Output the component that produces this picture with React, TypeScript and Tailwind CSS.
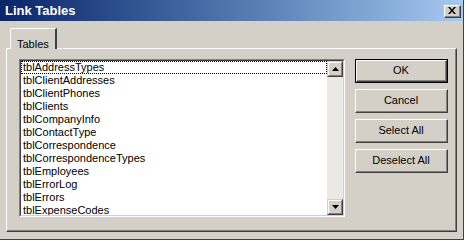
const tables = [
  'tblAddressTypes',
  'tblClientAddresses',
  'tblClientPhones',
  'tblClients',
  'tblCompanyInfo',
  'tblContactType',
  'tblCorrespondence',
  'tblCorrespondenceTypes',
  'tblEmployees',
  'tblErrorLog',
  'tblErrors',
  'tblExpenseCodes',
];

function Win95Button({ label, isDefault = false }: { label: string; isDefault?: boolean }) {
  const inner = (
    <div className="flex-1 flex border-t border-l border-t-white border-l-white border-r border-b border-r-[#404040] border-b-[#404040]">
      <div className="flex-1 flex items-center justify-center border-r border-b border-r-[#808080] border-b-[#808080] text-[11px] text-black">
        {label}
      </div>
    </div>
  );

  if (isDefault) {
    return <div className="h-[24px] flex border border-black">{inner}</div>;
  }
  return <div className="h-[24px] flex">{inner}</div>;
}

function ScrollArrow({ up }: { up: boolean }) {
  return (
    <div className="w-[16px] h-[16px] flex border-t border-l border-t-[#d4d0c8] border-l-[#d4d0c8] border-r border-b border-r-[#404040] border-b-[#404040] bg-[#d4d0c8]">
      <div className="flex-1 flex items-center justify-center border-t border-l border-t-white border-l-white border-r border-b border-r-[#808080] border-b-[#808080]">
        <svg width="7" height="4" viewBox="0 0 7 4">
          {up ? <path d="M3.5 0 L7 4 L0 4 Z" fill="#000" /> : <path d="M0 0 L7 0 L3.5 4 Z" fill="#000" />}
        </svg>
      </div>
    </div>
  );
}

export default function App() {
  return (
    <div className="w-[466px] h-[241px] bg-white overflow-hidden font-['Liberation_Sans',Arial,sans-serif]">
      <div className="w-[464px] h-[240px] bg-[#d4d0c8] flex flex-col border-r border-b border-r-[#404040] border-b-[#404040]">
        {/* title bar */}
        <div className="h-[21px] flex items-center justify-between pl-[5px] pr-[2px] bg-gradient-to-r from-[#0a246a] to-[#a6caf0]">
          <span className="text-[13px] font-bold text-white">Link Tables</span>
          <div className="w-[17px] h-[13px] mt-[1px] flex border-t border-l border-t-white border-l-white border-r border-b border-r-[#404040] border-b-[#404040] bg-[#d4d0c8]">
            <div className="flex-1 flex items-center justify-center border-r border-b border-r-[#808080] border-b-[#808080]">
              <svg width="8" height="7" viewBox="0 0 8 7">
                <path d="M0 0 L2 0 L4 2.5 L6 0 L8 0 L5 3.5 L8 7 L6 7 L4 4.5 L2 7 L0 7 L3 3.5 Z" fill="#000" />
              </svg>
            </div>
          </div>
        </div>

        {/* body */}
        <div className="pt-[7px] pl-[6px]">
          <div className="flex pl-[4px]">
            <div className="relative z-10 -mb-px h-[21px] px-[6px] pt-[2px] bg-[#d4d0c8] rounded-tl-[2px] border-t border-l border-t-white border-l-white border-r-2 border-r-[#404040]">
              <span className="text-[11px] text-black">Tables</span>
            </div>
          </div>

          {/* tab panel */}
          <div className="w-[451px] h-[184px] flex border-t border-l border-t-white border-l-white border-r border-b border-r-[#404040] border-b-[#404040]">
            <div className="flex-1 flex pt-[10px] pl-[12px] border-r border-b border-r-[#808080] border-b-[#808080]">
              {/* list box */}
              <div className="w-[326px] h-[158px] flex border-t border-l border-t-[#808080] border-l-[#808080] border-r border-b border-r-white border-b-white">
                <div className="flex-1 flex border-t border-l border-t-[#404040] border-l-[#404040] border-r border-b border-r-[#d4d0c8] border-b-[#d4d0c8] bg-white overflow-hidden">
                  <div className="flex-1 flex flex-col overflow-hidden">
                    {tables.map((name, i) => (
                      <div
                        key={name}
                        className={`h-[13px] shrink-0 pl-[1px] flex items-center text-[11px] leading-[13px] text-black ${
                          i === 0 ? 'border border-dotted border-black pl-0' : 'border border-transparent'
                        }`}
                      >
                        {name}
                      </div>
                    ))}
                  </div>
                  <div className="w-[16px] flex flex-col bg-[#ebe9e5]">
                    <ScrollArrow up />
                    <div className="flex-1" />
                    <ScrollArrow up={false} />
                  </div>
                </div>
              </div>

              {/* buttons */}
              <div className="ml-[10px] w-[93px] flex flex-col gap-[6px]">
                <Win95Button label="OK" isDefault />
                <Win95Button label="Cancel" />
                <Win95Button label="Select All" />
                <Win95Button label="Deselect All" />
              </div>
            </div>
          </div>
        </div>
      </div>
    </div>
  );
}
